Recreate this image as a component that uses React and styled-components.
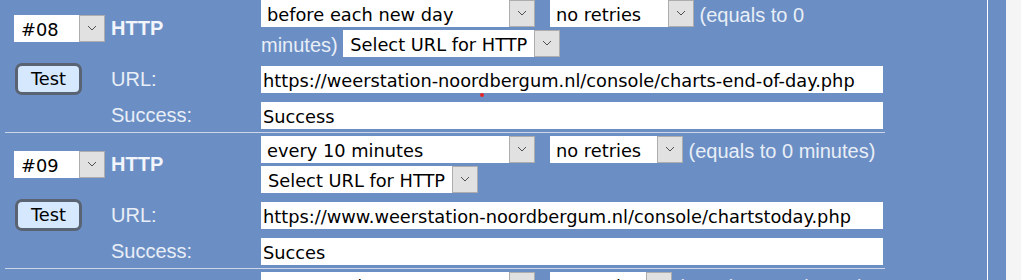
import React from 'react';
import styled, { createGlobalStyle } from 'styled-components';

const Global = createGlobalStyle`
  html, body { margin: 0; padding: 0; overflow: hidden; background: #f5f5f5; }
  #root { width: 1021px; height: 280px; overflow: hidden; }
`;

const BLUE = '#6b8fc4';
const LABEL = '#e9eef7';
const FIELD_FONT = `"DejaVu Sans", Verdana, sans-serif`;

const Frame = styled.div`
  display: flex;
  width: 1021px;
  height: 280px;
`;

const Main = styled.div`
  position: relative;
  width: 1006px;
  background: ${BLUE};
  flex: none;
`;

const Track = styled.div`
  flex: 1;
  background: #f5f5f5;
`;

const Panel = styled.div`
  width: 987px;
  height: 100%;
  border-right: 1px solid #ffffff;
  box-sizing: content-box;
`;

const List = styled.div`
  width: 880px;
  margin-left: 5px;
`;

const Row = styled.div`
  display: grid;
  grid-template-columns: 91px 144px 622px;
  grid-template-rows: 57px 33px 27px;
  column-gap: 6px;
  row-gap: 6px;
  padding: 3px 2px 3px 9px;
  border-top: 1px solid #cdd6e6;
  &:first-child {
    border-top: none;
    padding-top: 0;
  }
`;

const SelectWrap = styled.span`
  display: inline-flex;
  vertical-align: top;
  height: 27px;
  align-self: center;
  margin-right: ${(p) => p.$gap || 0}px;
`;

const SelectValue = styled.span`
  display: block;
  width: ${(p) => p.$width}px;
  height: 27px;
  box-sizing: border-box;
  background: #ffffff;
  color: #000;
  font-family: ${FIELD_FONT};
  font-size: 17.8px;
  line-height: 25px;
  padding: 2px 0 0 ${(p) => p.$indent || 6}px;
  white-space: nowrap;
  overflow: hidden;
`;

const SelectButton = styled.span`
  display: flex;
  align-items: center;
  justify-content: center;
  width: 26px;
  height: 27px;
  box-sizing: border-box;
  background: #e1e1e1;
  border: 1px solid #adadad;
  padding-bottom: 2px;
`;

const Chevron = () => (
  <svg width="10" height="6" viewBox="0 0 10 6">
    <polyline points="1,1 5,5 9,1" fill="none" stroke="#505050" strokeWidth="1" />
  </svg>
);

const Select = ({ value, width, gap, indent }) => (
  <SelectWrap $gap={gap}>
    <SelectValue $width={width} $indent={indent}>{value}</SelectValue>
    <SelectButton>
      <Chevron />
    </SelectButton>
  </SelectWrap>
);

const Kind = styled.div`
  align-self: center;
  font-family: "Liberation Sans", Arial, sans-serif;
  font-weight: bold;
  font-size: 20px;
  color: #f2f5fb;
`;

const Schedule = styled.div`
  font-family: "Liberation Sans", Arial, sans-serif;
  font-size: 20px;
  line-height: 30px;
  color: ${LABEL};
`;

const TestButton = styled.button`
  align-self: start;
  width: 67px;
  height: 32px;
  margin-left: 1px;
  padding: 0 0 1px;
  box-sizing: border-box;
  border: 3px solid #5a6371;
  border-radius: 7px;
  background: #d5e8fd;
  color: #000;
  font-family: ${FIELD_FONT};
  font-size: 17.8px;
  cursor: pointer;
`;

const Label = styled.div`
  align-self: center;
  font-family: "Liberation Sans", Arial, sans-serif;
  font-size: 20px;
  color: ${LABEL};
`;

const Field = styled.div`
  align-self: center;
  height: 27px;
  box-sizing: border-box;
  background: #ffffff;
  color: #000;
  font-family: ${FIELD_FONT};
  font-size: 17.8px;
  line-height: 25px;
  padding: 2px 0 0 2px;
  white-space: nowrap;
  overflow: hidden;
`;

const Marker = styled.span`
  position: absolute;
  left: 480px;
  top: 93px;
  width: 4px;
  height: 4px;
  border-radius: 50%;
  background: #e4262a;
`;

const Spacer = styled.div``;

const jobs = [
  {
    num: '#08',
    interval: 'before each new day',
    retries: 'no retries',
    retriesWidth: 118,
    equals: '(equals to 0 minutes)',
    url: 'https://weerstation-noordbergum.nl/console/charts-end-of-day.php',
    success: 'Success',
  },
  {
    num: '#09',
    interval: 'every 10 minutes',
    retries: 'no retries',
    retriesWidth: 107,
    equals: '(equals to 0 minutes)',
    url: 'https://www.weerstation-noordbergum.nl/console/chartstoday.php',
    success: 'Succes',
  },
  {
    num: '#10',
    interval: 'every 5 minutes',
    retries: 'no retries',
    retriesWidth: 96,
    equals: '(equals to 5 minutes)',
    url: 'https://www.weerstation-noordbergum.nl/console/chartsyesterday.php',
    success: 'Success',
  },
];

export default function App() {
  return (
    <>
      <Global />
      <Frame>
        <Main>
          <Panel>
            <List>
              {jobs.map((job) => (
                <Row key={job.num}>
                  <Select value={job.num} width={66} indent={7} />
                  <Kind>HTTP</Kind>
                  <Schedule>
                    <Select value={job.interval} width={248} gap={15} />
                    <Select value={job.retries} width={job.retriesWidth} />
                    {' '}{job.equals}{' '}
                    <Select value="Select URL for HTTP" width={191} indent={7} />
                  </Schedule>

                  <TestButton type="button">Test</TestButton>
                  <Label>URL:</Label>
                  <Field>{job.url}</Field>

                  <Spacer />
                  <Label>Success:</Label>
                  <Field>{job.success}</Field>
                </Row>
              ))}
            </List>
          </Panel>
          <Marker />
        </Main>
        <Track />
      </Frame>
    </>
  );
}
